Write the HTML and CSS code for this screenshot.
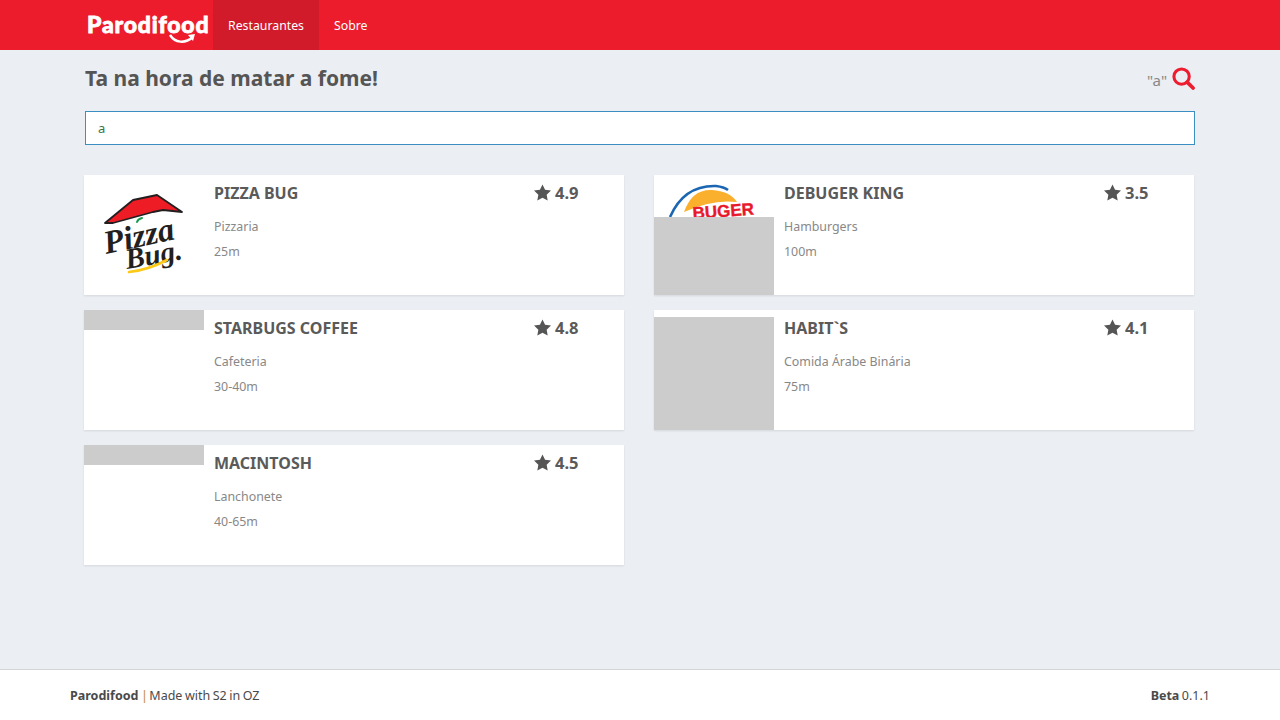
FILE: index.html
```html
<!DOCTYPE html>
<html lang="pt-br">
<head>
<meta charset="UTF-8">
<meta name="viewport" content="width=device-width, initial-scale=1.0">
<title>Parodifood</title>
<link rel="stylesheet" href="styles.css">
</head>

<body>
  <nav class="navbar">
    <a class="brand" href="#">
      <span class="brand-name">Parodifood</span>
      <svg class="brand-smile" width="30" height="14" viewBox="0 0 30 14">
        <path d="M3 3 C8 11 18 12 26 5" fill="none" stroke="#fff" stroke-width="2.4"/>
        <path d="M21 3 L28 2 L26 9 Z" fill="#fff"/>
      </svg>
    </a>
    <a class="nav-item active" href="#">Restaurantes</a>
    <a class="nav-item" href="#">Sobre</a>
  </nav>

  <main class="content">
    <div class="page-head">
      <h1>Ta na hora de matar a fome!</h1>
      <div class="search-toggle">
        <span class="search-term">"a"</span>
        <svg class="search-icon" width="23" height="23" viewBox="0 0 24 24">
          <circle cx="10" cy="10" r="8" fill="none" stroke="#ed1c2e" stroke-width="3.2"/>
          <path d="M15.8 15.8 L22 22" stroke="#ed1c2e" stroke-width="3.8" stroke-linecap="round"/>
        </svg>
      </div>
    </div>

    <input class="search-input" type="text" value="a">

    <section class="restaurants">
      <article class="card">
        <div class="card-img">
          <svg class="logo" width="120" height="120" viewBox="0 0 120 120">
            <path d="M21 48 L49 25 L73 20 L98 37 L79 35 L69 37 L29 48 Z" fill="#ee1c25" stroke="#231f20" stroke-width="1.8" stroke-linejoin="round"/>
            <path d="M53 47 Q54 44 58 43" fill="none" stroke="#1a9b50" stroke-width="2" stroke-linecap="round"/>
            <text class="pizza-text" x="22" y="79" transform="rotate(-12 22 79)">Pizza</text>
            <text class="pizza-text small" x="43" y="94" transform="rotate(-10 43 94)">Bug.</text>
            <path d="M45 97 Q64 95 83 85" fill="none" stroke="#fcc917" stroke-width="2.6" stroke-linecap="round"/>
          </svg>
        </div>
        <div class="card-info">
          <h2>PIZZA BUG</h2>
          <p>Pizzaria</p>
          <p>25m</p>
        </div>
        <div class="rating">
          <svg width="17" height="17" viewBox="0 0 18 17"><path d="M9 0 L11.7 5.6 L18 6.5 L13.4 10.8 L14.5 17 L9 14 L3.5 17 L4.6 10.8 L0 6.5 L6.3 5.6 Z" fill="#555"/></svg>
          4.9
        </div>
      </article>

      <article class="card">
        <div class="card-img">
          <div class="img-top">
            <svg class="logo" width="120" height="42" viewBox="0 0 120 42">
              <path d="M16 42 Q30 10 62 11 Q70 12 74 15" fill="none" stroke="#1a66b2" stroke-width="2.6"/>
              <path d="M30 37 Q38 14 58 15 Q76 16 83 27 Q58 24 30 37 Z" fill="#fbb02d"/>
              <text class="burger-text" x="39" y="44" transform="rotate(-4 39 44)">BUGER</text>
            </svg>
          </div>
          <div class="placeholder fill"></div>
        </div>
        <div class="card-info">
          <h2>DEBUGER KING</h2>
          <p>Hamburgers</p>
          <p>100m</p>
        </div>
        <div class="rating">
          <svg width="17" height="17" viewBox="0 0 18 17"><path d="M9 0 L11.7 5.6 L18 6.5 L13.4 10.8 L14.5 17 L9 14 L3.5 17 L4.6 10.8 L0 6.5 L6.3 5.6 Z" fill="#555"/></svg>
          3.5
        </div>
      </article>

      <article class="card">
        <div class="card-img">
          <div class="placeholder strip"></div>
        </div>
        <div class="card-info">
          <h2>STARBUGS COFFEE</h2>
          <p>Cafeteria</p>
          <p>30-40m</p>
        </div>
        <div class="rating">
          <svg width="17" height="17" viewBox="0 0 18 17"><path d="M9 0 L11.7 5.6 L18 6.5 L13.4 10.8 L14.5 17 L9 14 L3.5 17 L4.6 10.8 L0 6.5 L6.3 5.6 Z" fill="#555"/></svg>
          4.8
        </div>
      </article>

      <article class="card">
        <div class="card-img">
          <div class="img-gap"></div>
          <div class="placeholder fill"></div>
        </div>
        <div class="card-info">
          <h2>HABIT`S</h2>
          <p>Comida Árabe Binária</p>
          <p>75m</p>
        </div>
        <div class="rating">
          <svg width="17" height="17" viewBox="0 0 18 17"><path d="M9 0 L11.7 5.6 L18 6.5 L13.4 10.8 L14.5 17 L9 14 L3.5 17 L4.6 10.8 L0 6.5 L6.3 5.6 Z" fill="#555"/></svg>
          4.1
        </div>
      </article>

      <article class="card">
        <div class="card-img">
          <div class="placeholder strip"></div>
        </div>
        <div class="card-info">
          <h2>MACINTOSH</h2>
          <p>Lanchonete</p>
          <p>40-65m</p>
        </div>
        <div class="rating">
          <svg width="17" height="17" viewBox="0 0 18 17"><path d="M9 0 L11.7 5.6 L18 6.5 L13.4 10.8 L14.5 17 L9 14 L3.5 17 L4.6 10.8 L0 6.5 L6.3 5.6 Z" fill="#555"/></svg>
          4.5
        </div>
      </article>
    </section>
  </main>

  <footer class="footer">
    <div><strong>Parodifood</strong> <span class="sep">|</span> Made with S2 in OZ</div>
    <div><strong>Beta</strong> 0.1.1</div>
  </footer>
</body>
</html>
```

FILE: styles.css
```css
* {
  box-sizing: border-box;
  margin: 0;
  padding: 0;
}

html, body {
  height: 100%;
}

body {
  display: flex;
  flex-direction: column;
  font-family: "Noto Sans", Arial, sans-serif;
  background-color: #ebeef3;
  color: #555;
}

a {
  text-decoration: none;
}

.navbar {
  display: flex;
  height: 50px;
  padding-left: 85px;
  background-color: #ec1c2d;
}

.brand {
  position: relative;
  width: 128px;
  padding: 13px 0 0 2px;
}

.brand-name {
  display: block;
  font-family: "Lato", sans-serif;
  font-weight: 900;
  font-size: 23px;
  line-height: 22px;
  letter-spacing: 0.8px;
  color: #fff;
  -webkit-text-stroke: 0.8px #fff;
}

.brand-smile {
  position: absolute;
  left: 82px;
  top: 32px;
}

.nav-item {
  display: flex;
  align-items: center;
  padding: 0 15px;
  font-size: 12.3px;
  color: #fff;
}

.nav-item.active {
  background-color: #d11a2a;
}

.content {
  flex: 1;
  padding: 0 85px;
}

.page-head {
  display: flex;
  justify-content: space-between;
  align-items: center;
  height: 56px;
  margin-bottom: 5px;
}

h1 {
  font-size: 21px;
  font-weight: 700;
}

.search-toggle {
  display: flex;
  align-items: center;
  gap: 5px;
}

.search-term {
  margin-top: 3px;
  font-size: 15px;
  color: #888;
}

.search-icon {
  margin: 0;
}

.search-input {
  display: block;
  width: 100%;
  height: 34px;
  padding: 0 12px;
  border: 1px solid #3a8fc0;
  background-color: #fff;
  font-family: inherit;
  font-size: 13px;
  color: #3c763d;
  outline: none;
}

.restaurants {
  display: grid;
  grid-template-columns: 540px 540px;
  grid-auto-rows: 120px;
  column-gap: 30px;
  row-gap: 15px;
  margin: 30px 0 0 -1px;
}

.card {
  display: flex;
  background-color: #fff;
  box-shadow: 0 1px 2px rgba(0, 0, 0, 0.1);
}

.card-img {
  display: flex;
  flex-direction: column;
  width: 120px;
  flex-shrink: 0;
}

.logo {
  display: block;
  overflow: visible;
}

.pizza-text {
  font-family: "Liberation Serif", serif;
  font-style: italic;
  font-weight: 700;
  font-size: 33px;
  fill: #231f20;
}

.pizza-text.small {
  font-size: 29px;
}

.burger-text {
  font-family: "Liberation Sans", sans-serif;
  font-weight: 700;
  font-size: 17px;
  fill: #e8182c;
  stroke: #e8182c;
  stroke-width: 0.4;
}

.placeholder {
  position: relative;
  background-color: #ccc;
}

.placeholder.strip {
  height: 20px;
}

.placeholder.fill {
  flex: 1;
}

.img-gap {
  height: 7px;
}

.card-info {
  flex: 1;
  padding: 6px 0 0 10px;
}

.card-info h2 {
  margin-bottom: 12px;
  font-size: 16px;
  line-height: 24px;
  font-weight: 700;
  color: #5a5a5a;
}

.card-info p {
  margin-bottom: 5px;
  font-size: 12.4px;
  line-height: 20px;
  color: #888;
}

.rating {
  display: flex;
  align-items: flex-start;
  gap: 4px;
  width: 90px;
  padding-top: 6px;
  font-size: 16.5px;
  line-height: 24px;
  font-weight: 700;
  color: #5a5a5a;
}

.rating svg {
  margin-top: 3px;
}

.footer {
  display: flex;
  justify-content: space-between;
  align-items: center;
  height: 51px;
  padding: 0 70px;
  border-top: 1px solid #d5d5d5;
  background-color: #fff;
  font-size: 12.5px;
  word-spacing: -0.75px;
  color: #4a4a4a;
}

.sep {
  margin-right: -1px;
  color: #c8882c;
}
```
